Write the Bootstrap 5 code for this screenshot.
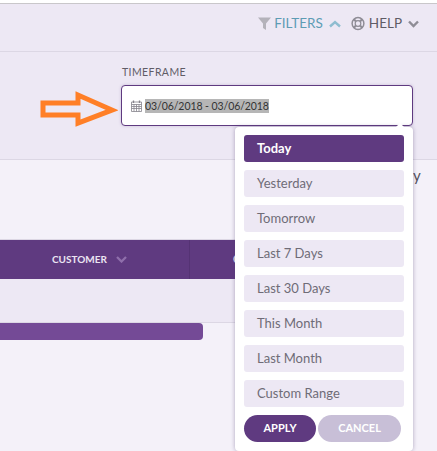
<!DOCTYPE html>
<html lang="en">
<head>
<meta charset="utf-8">
<title>Timeframe filter</title>
<link rel="stylesheet" href="https://cdn.jsdelivr.net/npm/bootstrap@5.3.0/dist/css/bootstrap.min.css">
<style>
html,body{height:451px;overflow:hidden}
body{font-family:"Lato","Liberation Sans",sans-serif;background:#f4f1f9;color:#55525c;position:relative}
.top-strip{height:4px;background:#fff;border-bottom:1px solid #c9c7ca}
.tool-bar{height:48px;background:#ede8f4;border-bottom:1px solid #dcd7e4;padding:11px 18px 0 0;font-size:13.5px;line-height:17px}
.tool-link{color:#5d9cb4}
.tool-help{color:#5f5c66;margin-left:10px}
.ic-filter{margin-right:3px}
.ic-chev{margin-left:6px}
.ic-ring{margin-right:4px}
.filter-band{height:108px;background:#ede8f4;border-bottom:1px solid #dcd7e4;padding:14px 24px 0 0}
.filter-col{width:292px}
.field-label{font-size:10.5px;line-height:13px;color:#5f5c66;letter-spacing:.4px;margin-bottom:6px;padding-left:1px}
.date-box{height:41px;background:#fff;border:1px solid #5f3a80;border-radius:4px;padding:0 9px;box-shadow:0 0 3px rgba(95,58,128,.25);font-size:10.5px;letter-spacing:-.08px;color:#333}
.ic-cal{margin-right:3px;flex-shrink:0}
.date-sel{background:#b6b6b6;line-height:14px;display:inline-block}
.page-body{height:291px}
.content-col{width:300px;padding-top:79px}
.grid-head{height:40px;background:#5f3a80;color:#ebe4f2;font-size:10px;font-weight:700;border-top:1px solid #dcd7e4}
.head-cell{width:190px;height:100%;border-right:1px solid #553374;padding:0 62px 0 52px}
.head-next{padding-left:43px;font-size:10.500px}
.grid-sub{height:44px;background:#ede8f4;border-bottom:1px solid #dcd7e4}
.grid-bar{width:203px;height:17px;background:#744a96;border-radius:0 4px 4px 0}
.over-text{position:absolute;left:413px;top:165px;font-size:15px;line-height:20px;color:#55525c}
.pointer-arrow{position:absolute;left:38px;top:90px}
.range-menu{position:absolute;left:235px;top:127px;width:178px;height:324px;background:#fff;border-radius:4px;padding:8px 9px;box-shadow:0 0 4px rgba(70,50,100,.4)}
.range-menu::before{content:"";position:absolute;right:8px;top:-4px;border:5px solid transparent;border-top:0;border-bottom-color:#fff}
.range-item{height:27px;line-height:27px;background:#ede8f4;border-radius:3px;padding-left:13px;margin-bottom:8px;font-size:13px;color:#6f6c77}
.range-item.is-active{background:#5f3a80;color:#fff;font-weight:700}
.pill-btn{height:27px;border-radius:14px;border:0;color:#fff;font-size:11px;font-weight:700;padding:0;text-transform:uppercase}
.pill-apply{width:72px;background:#5f3a80;margin-right:2px}
.pill-cancel{width:83px;background:#c8bfd7}
</style>
</head>
<body>
<div class="top-strip"></div>
<div class="tool-bar d-flex justify-content-end align-items-start">
  <span class="d-flex align-items-center tool-link">
    <svg width="13" height="13" viewBox="0 0 13 13" class="ic-filter"><path d="M0 .5h13L8 6.500V13L5 11V6.500z" fill="#b4b2ba"/></svg>
    FILTERS
    <svg width="12" height="8" viewBox="0 0 12 8" class="ic-chev"><path d="M1 6.500l5-4.500 5 4.500" fill="none" stroke="#8fbdd0" stroke-width="2.400"/></svg>
  </span>
  <span class="d-flex align-items-center tool-help">
    <svg width="14" height="15" viewBox="0 0 15 15" class="ic-ring"><circle cx="7.500" cy="7.500" r="6.300" fill="none" stroke="#8f8d96" stroke-width="1.600"/><circle cx="7.500" cy="7.500" r="3" fill="none" stroke="#8f8d96" stroke-width="1.300"/><path d="M3 3l2.400 2.400M12 3L9.600 5.400M3 12l2.400-2.400M12 12L9.600 9.600" stroke="#8f8d96" stroke-width="2.200"/></svg>
    HELP
    <svg width="11" height="8" viewBox="0 0 11 8" class="ic-chev"><path d="M1 1.500l4.500 4.500L10 1.500" fill="none" stroke="#8f8d96" stroke-width="2.400"/></svg>
  </span>
</div>
<div class="filter-band d-flex justify-content-end">
  <div class="filter-col">
    <div class="field-label">TIMEFRAME</div>
    <div class="date-box d-flex align-items-center">
      <svg width="11" height="12" viewBox="0 0 11 12" class="ic-cal"><path d="M.5 2h10v9.500H.5zM.5 4.500h10M.5 6.500h10M.5 8.500h10M3 4.500v7M5.500 4.500v7M8 4.500v7" fill="none" stroke="#85838b" stroke-width=".8"/><path d="M2.500 .5v2.500M8.500 .5v2.500" stroke="#85838b" stroke-width="1.300"/></svg>
      <span class="date-sel">03/06/2018 - 03/06/2018</span>
    </div>
  </div>
</div>
<div class="page-body">
  <div class="content-col">
    <div class="grid-head d-flex align-items-center">
      <div class="head-cell d-flex align-items-center justify-content-between flex-shrink-0">
        <span>CUSTOMER</span>
        <svg width="11" height="7" viewBox="0 0 11 7"><path d="M1 1l4.500 4.500L10 1" fill="none" stroke="#8f6fab" stroke-width="2.300"/></svg>
      </div>
      <div class="head-next">C</div>
    </div>
    <div class="grid-sub"></div>
    <div class="grid-bar"></div>
  </div>
</div>
<div class="over-text">y</div>
<svg class="pointer-arrow" width="80" height="40" viewBox="0 0 80 40"><path d="M5 13H40V5L74 20 40 33V25H5z" fill="none" stroke="#ff7f27" stroke-width="5"/></svg>
<div class="range-menu">
  <div class="range-item is-active">Today</div>
  <div class="range-item">Yesterday</div>
  <div class="range-item">Tomorrow</div>
  <div class="range-item">Last 7 Days</div>
  <div class="range-item">Last 30 Days</div>
  <div class="range-item">This Month</div>
  <div class="range-item">Last Month</div>
  <div class="range-item">Custom Range</div>
  <div class="d-flex">
    <button type="button" class="btn pill-btn pill-apply">Apply</button>
    <button type="button" class="btn pill-btn pill-cancel">Cancel</button>
  </div>
</div>
<script src="https://cdn.jsdelivr.net/npm/bootstrap@5.3.0/dist/js/bootstrap.bundle.min.js"></script>
</body>
</html>
